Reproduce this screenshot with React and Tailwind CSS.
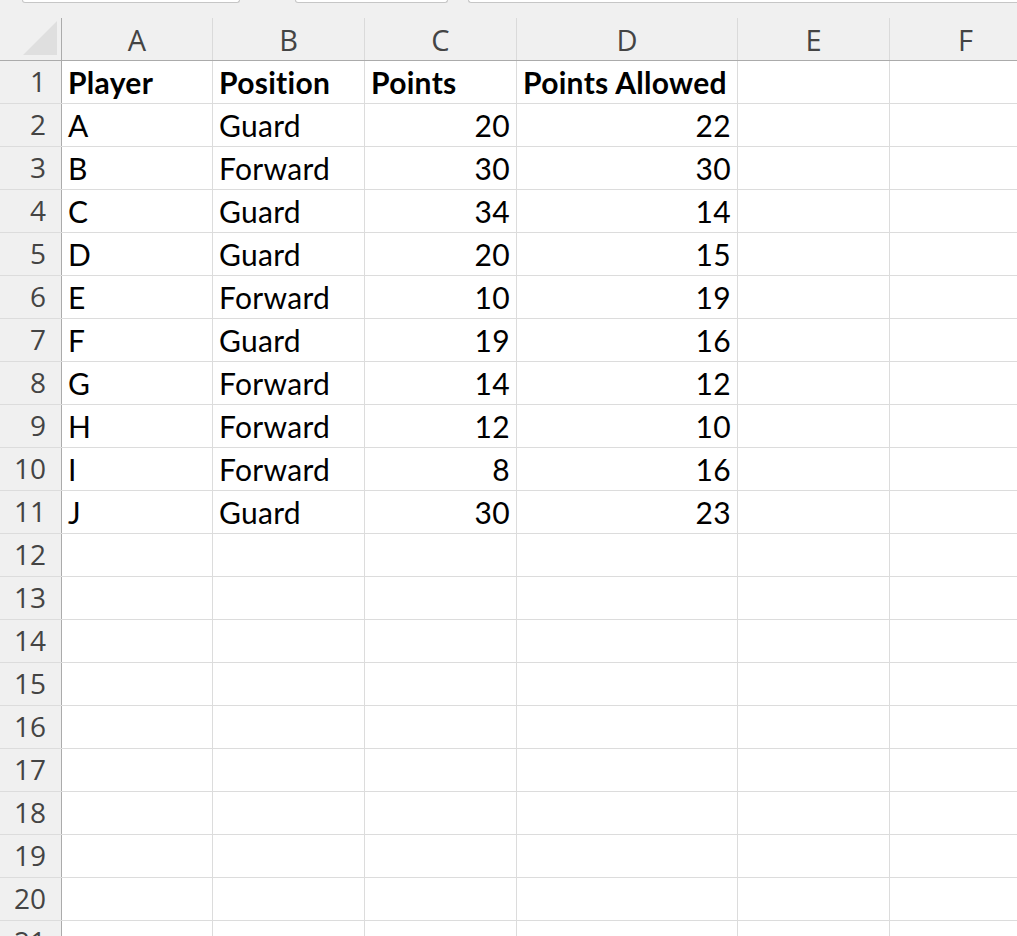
const columns = [
  { key: 'A', width: 'w-[151px]' },
  { key: 'B', width: 'w-[152px]' },
  { key: 'C', width: 'w-[152px]' },
  { key: 'D', width: 'w-[221px]' },
  { key: 'E', width: 'w-[152px]' },
  { key: 'F', width: 'w-[152px]' },
]

const data = [
  ['Player', 'Position', 'Points', 'Points Allowed'],
  ['A', 'Guard', 20, 22],
  ['B', 'Forward', 30, 30],
  ['C', 'Guard', 34, 14],
  ['D', 'Guard', 20, 15],
  ['E', 'Forward', 10, 19],
  ['F', 'Guard', 19, 16],
  ['G', 'Forward', 14, 12],
  ['H', 'Forward', 12, 10],
  ['I', 'Forward', 8, 16],
  ['J', 'Guard', 30, 23],
]

const totalRows = 21

function Cell({ col, value, bold }) {
  const isNumber = typeof value === 'number'
  return (
    <div
      className={`${col.width} shrink-0 h-full border-r border-[#dcdcdc] flex items-center px-[6px] pb-[1px] ${
        isNumber ? 'justify-end' : 'justify-start'
      } ${bold ? 'font-bold' : ''}`}
    >
      {value !== undefined && <span className="leading-none tracking-[0.3px]">{value}</span>}
    </div>
  )
}

export default function App() {
  const rows = Array.from({ length: totalRows }, (_, i) => i + 1)

  return (
    <div className="w-[1017px] h-[936px] overflow-hidden bg-white">
      {/* strip above the column headers */}
      <div className="h-[18px] bg-[#f0f0f0] flex items-start">
        <div className="ml-[22px] w-[218px] h-[3px] bg-white border border-t-0 border-[#c6c6c6] rounded-b-[3px]" />
        <div className="ml-[55px] w-[153px] h-[3px] bg-white border border-t-0 border-[#c6c6c6] rounded-b-[3px]" />
        <div className="ml-[20px] flex-1 h-[3px] bg-white border border-t-0 border-r-0 border-[#c6c6c6] rounded-bl-[3px]" />
      </div>

      {/* column headers */}
      <div className="h-[43px] flex bg-[#f0f0f0] border-b border-[#ababab] font-['Open_Sans',sans-serif] text-[29px] text-[#444444]">
        <div className="w-[62px] shrink-0 h-full border-r border-[#ababab] relative">
          <svg className="absolute left-0 top-0" width="61" height="42" viewBox="0 0 61 42">
            <polygon points="23,37 57,37 57,3" fill="#dfdfdf" />
          </svg>
        </div>
        {columns.map((col) => (
          <div
            key={col.key}
            className={`${col.width} shrink-0 h-full border-r border-[#dadada] flex items-center justify-center`}
          >
            <span className="leading-none">{col.key}</span>
          </div>
        ))}
      </div>

      {/* grid rows */}
      {rows.map((r) => {
        const values = data[r - 1] || []
        return (
          <div key={r} className="h-[43px] flex border-b border-[#dcdcdc]">
            <div className="w-[62px] shrink-0 h-full bg-[#f0f0f0] border-r border-[#ababab] flex items-center justify-end pr-[15px] pb-[2px] font-['Open_Sans',sans-serif] text-[28px] text-[#444444]">
              <span className="leading-none">{r}</span>
            </div>
            <div className="flex font-['Lato',sans-serif] text-[30px] text-black">
              {columns.map((col, ci) => (
                <Cell key={col.key} col={col} value={values[ci]} bold={r === 1} />
              ))}
            </div>
          </div>
        )
      })}
    </div>
  )
}
